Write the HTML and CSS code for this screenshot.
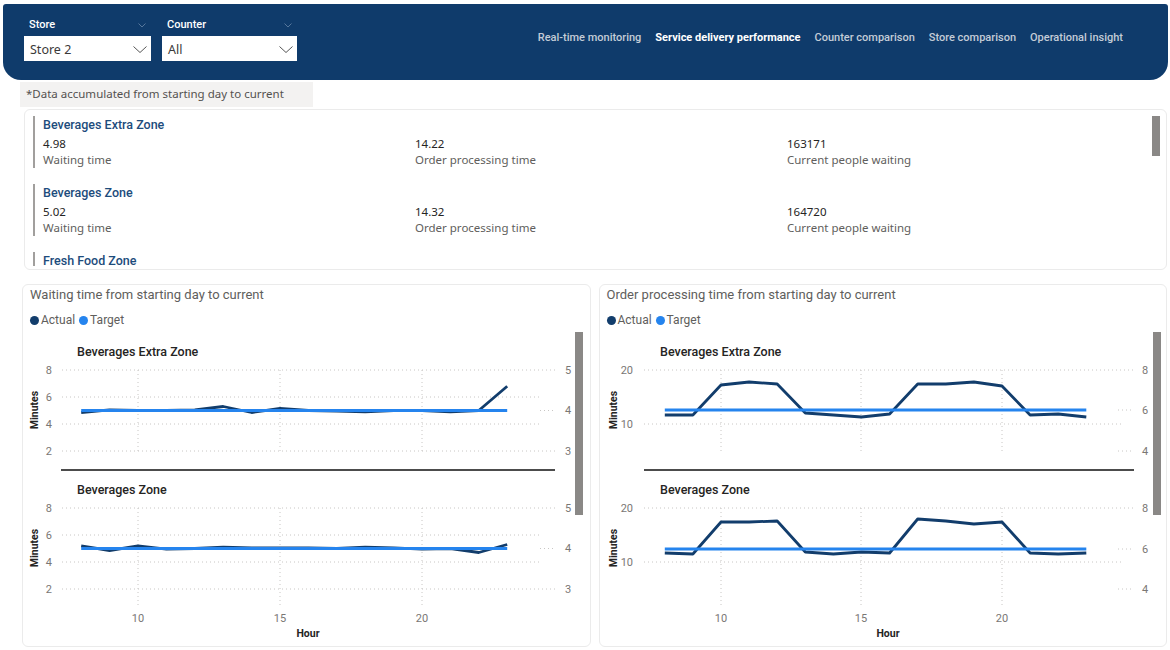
FILE: index.html
```html
<!DOCTYPE html>
<html lang="en">
<head>
<meta charset="utf-8">
<title>Service delivery performance</title>
<link rel="stylesheet" href="styles.css">
</head>
<body>
<header class="topbar">
  <div class="filters">
    <div class="filter filter-store">
      <div class="filter-head"><span>Store</span><svg class="mini-chev" width="8" height="5" viewBox="0 0 8 5"><polyline points="0.5,0.5 4,4 7.5,0.5"/></svg></div>
      <div class="select"><span>Store 2</span><svg class="chev" width="14" height="7" viewBox="0 0 14 7"><polyline points="0.5,0.5 7,6.5 13.5,0.5"/></svg></div>
    </div>
    <div class="filter filter-counter">
      <div class="filter-head"><span>Counter</span><svg class="mini-chev" width="8" height="5" viewBox="0 0 8 5"><polyline points="0.5,0.5 4,4 7.5,0.5"/></svg></div>
      <div class="select"><span>All</span><svg class="chev" width="14" height="7" viewBox="0 0 14 7"><polyline points="0.5,0.5 7,6.5 13.5,0.5"/></svg></div>
    </div>
  </div>
  <nav class="tabs">
    <a class="tab">Real-time monitoring</a>
    <a class="tab active">Service delivery performance</a>
    <a class="tab">Counter comparison</a>
    <a class="tab">Store comparison</a>
    <a class="tab">Operational insight</a>
  </nav>
</header>

<main class="page">
  <div class="note">*Data accumulated from starting day to current</div>

  <section class="zones">
    <div class="zone-list">
      <div class="zone">
        <div class="zone-title">Beverages Extra Zone</div>
        <div class="zone-metrics">
          <div class="metric"><div class="metric-value">4.98</div><div class="metric-label">Waiting time</div></div>
          <div class="metric"><div class="metric-value">14.22</div><div class="metric-label">Order processing time</div></div>
          <div class="metric"><div class="metric-value">163171</div><div class="metric-label">Current people waiting</div></div>
        </div>
      </div>
      <div class="zone">
        <div class="zone-title">Beverages Zone</div>
        <div class="zone-metrics">
          <div class="metric"><div class="metric-value">5.02</div><div class="metric-label">Waiting time</div></div>
          <div class="metric"><div class="metric-value">14.32</div><div class="metric-label">Order processing time</div></div>
          <div class="metric"><div class="metric-value">164720</div><div class="metric-label">Current people waiting</div></div>
        </div>
      </div>
      <div class="zone">
        <div class="zone-title">Fresh Food Zone</div>
      </div>
    </div>
    <div class="scroll-thumb"></div>
  </section>

  <section class="charts">
    <article class="chart-card">
      <h2 class="chart-title">Waiting time from starting day to current</h2>
      <div class="legend">
        <span class="legend-item"><i class="dot dot-actual"></i>Actual</span>
        <span class="legend-item"><i class="dot dot-target"></i>Target</span>
      </div>
      <svg class="plot" width="566" height="316" viewBox="1 0 566 316">
        <rect class="vscroll" x="553" y="2" width="8" height="183"/>
        <!-- top panel -->
        <text class="panel-title" x="55" y="22" dy=".35em">Beverages Extra Zone</text>
        <g class="grid">
          <line x1="40" y1="40" x2="533" y2="40"/>
          <line x1="40" y1="67" x2="518" y2="67"/>
          <line x1="40" y1="94" x2="518" y2="94"/>
          <line x1="40" y1="121" x2="533" y2="121"/>
          <line x1="518" y1="80.5" x2="533" y2="80.5"/>
          <line x1="116" y1="40" x2="116" y2="121"/>
          <line x1="258" y1="40" x2="258" y2="121"/>
          <line x1="400" y1="40" x2="400" y2="121"/>
        </g>
        <g class="ax ax-left">
          <text x="30" y="40" dy=".35em">8</text>
          <text x="30" y="67" dy=".35em">6</text>
          <text x="30" y="94" dy=".35em">4</text>
          <text x="30" y="121" dy=".35em">2</text>
        </g>
        <g class="ax">
          <text x="543" y="40" dy=".35em">5</text>
          <text x="543" y="80.5" dy=".35em">4</text>
          <text x="543" y="121" dy=".35em">3</text>
        </g>
        <text class="ax-name" transform="translate(12 80) rotate(-90)" dy=".35em">Minutes</text>
        <polyline class="line-actual" points="59.2,82.5 87.6,79.8 116,80.5 144.4,80.5 172.8,79.8 201.2,76.5 229.6,82.5 258,78.5 286.4,80.5 314.8,81.2 343.2,81.9 371.6,80.5 400,80.5 428.4,81.9 456.8,80.5 485.2,56.2"/>
        <line class="line-target" x1="59.2" y1="80.5" x2="485.2" y2="80.5"/>
        <line class="divider" x1="39" y1="140" x2="533" y2="140"/>
        <!-- bottom panel -->
        <text class="panel-title" x="55" y="160" dy=".35em">Beverages Zone</text>
        <g class="grid">
          <line x1="40" y1="178" x2="533" y2="178"/>
          <line x1="40" y1="205" x2="518" y2="205"/>
          <line x1="40" y1="232" x2="518" y2="232"/>
          <line x1="40" y1="259" x2="533" y2="259"/>
          <line x1="518" y1="218.5" x2="533" y2="218.5"/>
          <line x1="116" y1="178" x2="116" y2="278"/>
          <line x1="258" y1="178" x2="258" y2="278"/>
          <line x1="400" y1="178" x2="400" y2="278"/>
        </g>
        <g class="ax ax-left">
          <text x="30" y="178" dy=".35em">8</text>
          <text x="30" y="205" dy=".35em">6</text>
          <text x="30" y="232" dy=".35em">4</text>
          <text x="30" y="259" dy=".35em">2</text>
        </g>
        <g class="ax">
          <text x="543" y="178" dy=".35em">5</text>
          <text x="543" y="218.5" dy=".35em">4</text>
          <text x="543" y="259" dy=".35em">3</text>
        </g>
        <text class="ax-name" transform="translate(12 218) rotate(-90)" dy=".35em">Minutes</text>
        <polyline class="line-actual" points="59.2,215.8 87.6,220.5 116,215.8 144.4,219.2 172.8,218.5 201.2,217.2 229.6,217.8 258,217.8 286.4,217.8 314.8,218.5 343.2,217.2 371.6,217.8 400,219.2 428.4,218.5 456.8,222.5 485.2,214.5"/>
        <line class="line-target" x1="59.2" y1="218.5" x2="485.2" y2="218.5"/>
        <g class="ax ax-x">
          <text x="116" y="288" dy=".35em">10</text>
          <text x="258" y="288" dy=".35em">15</text>
          <text x="400" y="288" dy=".35em">20</text>
        </g>
        <text class="ax-name ax-hour" x="286" y="303" dy=".35em">Hour</text>
      </svg>
    </article>

    <article class="chart-card">
      <h2 class="chart-title">Order processing time from starting day to current</h2>
      <div class="legend">
        <span class="legend-item"><i class="dot dot-actual"></i>Actual</span>
        <span class="legend-item"><i class="dot dot-target"></i>Target</span>
      </div>
      <svg class="plot" width="567" height="316" viewBox="1 0 567 316">
        <rect class="vscroll" x="554" y="2" width="8" height="183"/>
        <text class="panel-title" x="61" y="22" dy=".35em">Beverages Extra Zone</text>
        <g class="grid">
          <line x1="45" y1="40" x2="535" y2="40"/>
          <line x1="45" y1="94" x2="522" y2="94"/>
          <line x1="519" y1="80" x2="535" y2="80"/>
          <line x1="519" y1="121" x2="535" y2="121"/>
          <line x1="122" y1="40" x2="122" y2="121"/>
          <line x1="262" y1="40" x2="262" y2="121"/>
          <line x1="403" y1="40" x2="403" y2="121"/>
        </g>
        <g class="ax ax-left">
          <text x="34" y="40" dy=".35em">20</text>
          <text x="34" y="94" dy=".35em">10</text>
        </g>
        <g class="ax">
          <text x="543" y="40" dy=".35em">8</text>
          <text x="543" y="80" dy=".35em">6</text>
          <text x="543" y="121" dy=".35em">4</text>
        </g>
        <text class="ax-name" transform="translate(14 80) rotate(-90)" dy=".35em">Minutes</text>
        <polyline class="line-actual" points="65.8,85 93.9,85 122,55 150.1,52 178.2,54 206.3,83 234.4,85 262.5,87 290.6,84 318.7,54 346.8,54 374.9,52 403,56 431.1,85 459.2,84 487.3,87"/>
        <line class="line-target" x1="65.8" y1="80" x2="487.3" y2="80"/>
        <line class="divider" x1="45" y1="140" x2="535" y2="140"/>
        <text class="panel-title" x="61" y="160" dy=".35em">Beverages Zone</text>
        <g class="grid">
          <line x1="45" y1="178" x2="535" y2="178"/>
          <line x1="45" y1="232" x2="522" y2="232"/>
          <line x1="519" y1="219" x2="535" y2="219"/>
          <line x1="519" y1="259" x2="535" y2="259"/>
          <line x1="122" y1="178" x2="122" y2="278"/>
          <line x1="262" y1="178" x2="262" y2="278"/>
          <line x1="403" y1="178" x2="403" y2="278"/>
        </g>
        <g class="ax ax-left">
          <text x="34" y="178" dy=".35em">20</text>
          <text x="34" y="232" dy=".35em">10</text>
        </g>
        <g class="ax">
          <text x="543" y="178" dy=".35em">8</text>
          <text x="543" y="219" dy=".35em">6</text>
          <text x="543" y="259" dy=".35em">4</text>
        </g>
        <text class="ax-name" transform="translate(14 218) rotate(-90)" dy=".35em">Minutes</text>
        <polyline class="line-actual" points="65.8,223 93.9,224 122,192 150.1,192 178.2,191 206.3,222 234.4,224 262.5,222 290.6,223 318.7,189 346.8,191 374.9,194 403,192 431.1,223 459.2,224 487.3,223"/>
        <line class="line-target" x1="65.8" y1="219" x2="487.3" y2="219"/>
        <g class="ax ax-x">
          <text x="122" y="288" dy=".35em">10</text>
          <text x="262" y="288" dy=".35em">15</text>
          <text x="403" y="288" dy=".35em">20</text>
        </g>
        <text class="ax-name ax-hour" x="289" y="303" dy=".35em">Hour</text>
      </svg>
    </article>
  </section>
</main>
</body>
</html>
```

FILE: styles.css
```css
* { box-sizing: border-box; }

html, body {
  margin: 0;
  padding: 0;
}

body {
  width: 1170px;
  height: 650px;
  overflow: hidden;
  background: #ffffff;
  font-family: "Noto Sans", "Liberation Sans", sans-serif;
  color: #252423;
}

/* ---------- header ---------- */
.topbar {
  margin: 4px 2px 0 3px;
  height: 76px;
  background: #0f3b6b;
  border-radius: 3px 3px 18px 18px;
  display: flex;
  align-items: flex-start;
  padding: 14px 45px 0 21px;
}

.filters {
  display: flex;
  gap: 11px;
}

.filter-store { width: 127px; }
.filter-counter { width: 135px; }

.filter-head {
  display: flex;
  justify-content: space-between;
  align-items: center;
  height: 14px;
  padding: 0 5px;
  margin-bottom: 4px;
  font: 500 11px/14px Roboto, sans-serif;
  color: #ffffff;
}

.mini-chev polyline {
  fill: none;
  stroke: #56779c;
  stroke-width: 1;
}

.select {
  height: 25px;
  background: #ffffff;
  display: flex;
  align-items: center;
  justify-content: space-between;
  padding: 1px 4px 0 6px;
  font-size: 12.5px;
  color: #3b3a39;
}

.chev polyline {
  fill: none;
  stroke: #555;
  stroke-width: 1;
}

.tabs {
  margin-left: auto;
  margin-top: 13px;
  display: flex;
  gap: 14px;
  font: 500 11px/14px Roboto, sans-serif;
}

.tab {
  color: #c3ccd7;
  white-space: nowrap;
}

.tab.active {
  color: #ffffff;
  font-weight: 700;
}

/* ---------- note ---------- */
.note {
  margin: 2px 0 0 20px;
  width: 293px;
  height: 25px;
  line-height: 24px;
  padding-left: 6px;
  background: #f3f2f1;
  font-size: 11.5px;
  color: #53514f;
}

/* ---------- zones card ---------- */
.zones {
  position: relative;
  margin: 2px 3px 0 24px;
  height: 161px;
  border: 1px solid #ebebeb;
  border-radius: 6px;
  overflow: hidden;
  padding: 6px 0 0 8px;
}

.zone-list {
  display: flex;
  flex-direction: column;
  gap: 16px;
  height: 150px;
  overflow: hidden;
}

.zone {
  flex: none;
  border-left: 2px solid #a19f9d;
  padding-left: 8px;
}

.zone-title {
  font: 500 12.5px/17px Roboto, sans-serif;
  color: #1d4c7c;
}

.zone-metrics {
  display: grid;
  grid-template-columns: 372px 372px 372px;
  padding-top: 3px;
}

.metric-value {
  font-size: 11.5px;
  line-height: 16px;
  color: #252423;
}

.metric-label {
  font-size: 11.5px;
  line-height: 16px;
  color: #605e5c;
}

.scroll-thumb {
  position: absolute;
  top: 6px;
  right: 6px;
  width: 8px;
  height: 40px;
  background: #8a8886;
}

/* ---------- charts ---------- */
.charts {
  margin: 14px 3px 0 22px;
  display: flex;
  gap: 8px;
}

.chart-card {
  flex: 1 1 0;
  height: 363px;
  border: 1px solid #ebebeb;
  border-radius: 6px;
  overflow: hidden;
}

.chart-title {
  margin: 0;
  padding: 2px 0 0 7px;
  font: 400 13px/16px Roboto, sans-serif;
  color: #605e5c;
}

.legend {
  margin-top: 9px;
  padding-left: 7px;
  display: flex;
  gap: 4px;
  font: 400 12px/16px Roboto, sans-serif;
  color: #605e5c;
}

.legend-item {
  display: flex;
  align-items: center;
  gap: 2px;
}

.dot {
  width: 9px;
  height: 9px;
  border-radius: 50%;
}

.dot-actual { background: #123d6c; }
.dot-target { background: #2584ee; }

.plot {
  display: block;
  margin-top: 2px;
  font-family: Roboto, sans-serif;
}

.vscroll { fill: #8a8886; }

.panel-title {
  font-size: 12.5px;
  font-weight: 500;
  fill: #252423;
}

.grid line {
  stroke: #c8c6c4;
  stroke-width: 1;
  stroke-dasharray: 1 3;
}

.ax text {
  font-size: 11px;
  fill: #7a7774;
}

.ax-left text { text-anchor: end; }
.ax-x text { text-anchor: middle; }

.ax-name {
  font-size: 10.5px;
  font-weight: 700;
  fill: #252423;
  text-anchor: middle;
}

.line-actual {
  fill: none;
  stroke: #123d6c;
  stroke-width: 2.8;
  stroke-linejoin: round;
}

.line-target {
  stroke: #2584ee;
  stroke-width: 2.8;
}

.divider {
  stroke: #111;
  stroke-width: 1.5;
}
```
